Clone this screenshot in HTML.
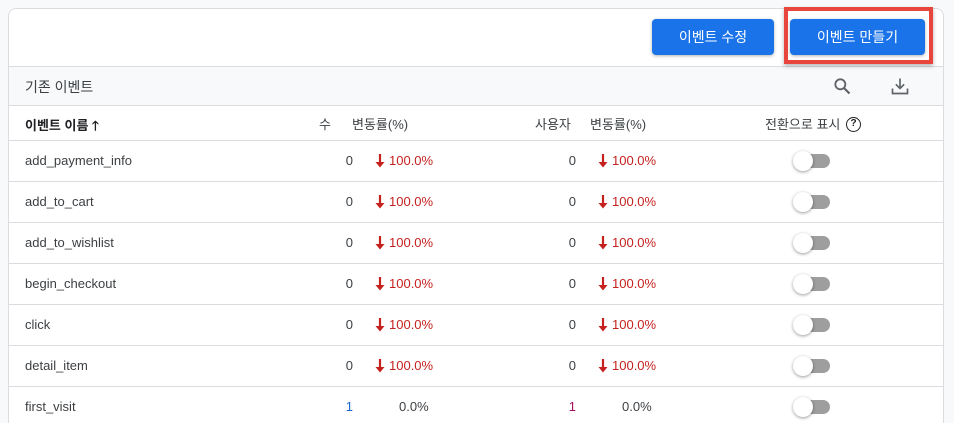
<!DOCTYPE html>
<html style="width:954px;height:423px;overflow:hidden"><head><meta charset="utf-8"><style>
*{box-sizing:border-box;margin:0;padding:0}
body{width:954px;height:423px;overflow:hidden;background:#f8f9fa;font-family:"Liberation Sans","Noto Sans CJK KR",sans-serif;font-size:13px;color:#3c4043;position:relative}
.card{position:absolute;left:8px;top:8px;width:936px;height:415px;background:#fff;border:1px solid #dadce0;border-bottom:none;border-radius:8px 8px 0 0;overflow:hidden}
.abs{position:absolute}
.btn{position:absolute;top:10px;height:36px;background:#1a73e8;color:#fff;border-radius:4px;font-size:14px;display:flex;align-items:center;justify-content:center;box-shadow:0 1px 3px rgba(0,0,0,.3)}
.sub{position:absolute;left:0;top:57px;width:100%;height:40px;background:#f8f9fa;border-top:1px solid #dadce0;border-bottom:1px solid #dadce0}
.row{position:absolute;left:0;width:100%;height:41px;border-bottom:1px solid #dadce0}
.t{position:absolute;top:12px;white-space:nowrap}
.r{text-align:right}
.pct{color:#c5221f}
.arr{position:absolute;top:13px;width:10px;height:14px}
.tog{position:absolute;left:787px;top:13px;width:34px;height:14px;border-radius:7px;background:#9e9e9e}
.tog::after{content:"";position:absolute;left:-3px;top:-3px;width:20px;height:20px;border-radius:50%;background:#fff;box-shadow:0 1px 3px rgba(0,0,0,.4)}
</style></head><body>
<div class="card">
  <div class="btn" style="left:643px;width:122px">이벤트 수정</div>
  <div class="btn" style="left:781px;width:135px">이벤트 만들기</div>
  <div class="sub">
    <div class="t" style="left:16px;top:10px;font-size:14px">기존 이벤트</div>
    <svg class="abs" style="left:823px;top:9px" width="20" height="20" viewBox="0 0 24 24"><circle cx="10" cy="10" r="6" fill="none" stroke="#5f6368" stroke-width="2.2"/><path d="M14.5 14.5L21 21" stroke="#5f6368" stroke-width="2.6"/></svg>
    <svg class="abs" style="left:881px;top:9px" width="20" height="20" viewBox="0 0 24 24"><path d="M12 3v12M7 10l5 5 5-5M3 15v6h18v-6" fill="none" stroke="#5f6368" stroke-width="2"/></svg>
  </div>
  <div class="row" style="top:97px;height:35px">
    <div class="t" style="left:16px;top:9px;font-weight:bold;color:#202124">이벤트 이름 <span style="font-size:13px">🡑</span></div>
    <div class="t" style="left:310px;top:8px;width:16px" >수</div>
    <div class="t" style="left:343px;top:8px">변동률(%)</div>
    <div class="t" style="left:526px;top:8px">사용자</div>
    <div class="t" style="left:581px;top:8px">변동률(%)</div>
    <div class="t" style="left:756px;top:8px">전환으로 표시</div>
    <div class="abs" style="left:837px;top:11px;width:15px;height:15px;border:1.5px solid #202124;border-radius:50%;font-size:10px;font-weight:bold;text-align:center;line-height:12px;color:#202124">?</div>
  </div>
</div>
<script>
const names=["add_payment_info","add_to_cart","add_to_wishlist","begin_checkout","click","detail_item","first_visit"];
const card=document.querySelector('.card');
names.forEach((n,i)=>{
 const top=132+i*41;const last=i==6;
 const d=document.createElement('div');d.className='row';d.style.top=top+'px';
 const arrow=x=>`<svg class="arr" style="left:${x}px" viewBox="0 0 10 14"><path d="M5 0v10" stroke="#c5221f" stroke-width="2.2"/><path d="M0.5 8L5 13.5 9.5 8z" fill="#c5221f"/></svg>`;
 d.innerHTML=`<div class="t" style="left:16px">${n}</div>
 <div class="t r" style="left:300px;width:44px;color:${last?'#1967d2':'#3c4043'}">${last?1:0}</div>
 ${last?'':arrow(366)}<div class="t ${last?'':'pct'}" style="left:${last?390:380}px">${last?'0.0%':'100.0%'}</div>
 <div class="t r" style="left:520px;width:47px;color:${last?'#a50e5e':'#3c4043'}">${last?1:0}</div>
 ${last?'':arrow(589)}<div class="t ${last?'':'pct'}" style="left:${last?613:603}px">${last?'0.0%':'100.0%'}</div>
 <div class="tog"></div>`;
 card.appendChild(d);
});
</script>
<div class="abs" style="left:784px;top:7px;width:149px;height:57px;border:4px solid #e8453c;box-shadow:0 2px 4px rgba(0,0,0,.3)"></div>
</body></html>
